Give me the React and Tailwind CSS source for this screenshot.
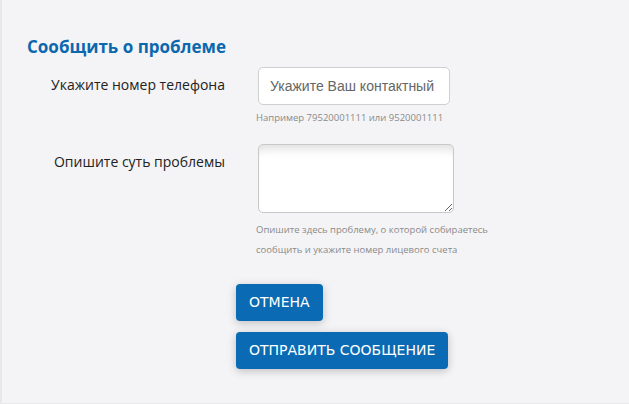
import React from "react";

export default function App() {
  return (
    <div className="w-[629px] h-[404px] bg-[#f4f4f6] border-l-2 border-b border-[#e8e8ea] overflow-hidden">
      <div className="pt-[35px] pl-[25px]">
        <h2 className="text-[17px] leading-[24px] font-bold text-[#0b68ae] [font-family:'Open_Sans',sans-serif]">
          Сообщить о проблеме
        </h2>
        <div className="mt-[8px] flex">
          <div className="w-[198px] text-right pt-[8px] text-[14px] leading-[20px] text-[#222] [font-family:'Open_Sans',sans-serif]">
            Укажите номер телефона
          </div>
          <div className="ml-[33px] flex flex-col">
            <input
              className="w-[192px] h-[38px] rounded-[5px] border border-[#cfcfcf] bg-white px-[11px] text-[14px] text-[#666] placeholder:text-[#666] [font-family:'Liberation_Sans',sans-serif] outline-none"
              placeholder="Укажите Ваш контактный номер телефона"
            />
            <div className="ml-[-2px] mt-[5px] text-[9.5px] leading-[16px] text-[#8a8a8a] [font-family:'Open_Sans',sans-serif]">
              Например 79520001111 или 9520001111
            </div>
          </div>
        </div>
        <div className="mt-[18px] flex">
          <div className="w-[198px] text-right pt-[8px] text-[14px] leading-[20px] text-[#222] [font-family:'Open_Sans',sans-serif]">
            Опишите суть проблемы
          </div>
          <div className="ml-[33px] flex flex-col">
            <textarea className="w-[196px] h-[69px] rounded-[5px] border border-[#c8c8c8] bg-white shadow-[inset_0_10px_10px_-6px_rgba(0,0,0,0.13)] outline-none" />
            <div className="ml-[-2px] mt-[7px] w-[250px] text-[9.5px] leading-[20px] text-[#8a8a8a] [font-family:'Open_Sans',sans-serif]">
              Опишите здесь проблему, о которой собираетесь сообщить и укажите номер лицевого счета
            </div>
          </div>
        </div>
        <div className="ml-[209px] mt-[24px] flex flex-col items-start gap-[11px]">
          <button className="h-[37px] px-[13px] rounded-[4px] bg-[#0a6bb4] text-white text-[14px] [font-family:'DejaVu_Sans',sans-serif] shadow-[0_2px_8px_rgba(0,0,0,0.22)]">
            ОТМЕНА
          </button>
          <button className="h-[37px] px-[13px] rounded-[4px] bg-[#0a6bb4] text-white text-[14px] [font-family:'DejaVu_Sans',sans-serif] shadow-[0_2px_8px_rgba(0,0,0,0.22)]">
            ОТПРАВИТЬ СООБЩЕНИЕ
          </button>
        </div>
      </div>
    </div>
  );
}
